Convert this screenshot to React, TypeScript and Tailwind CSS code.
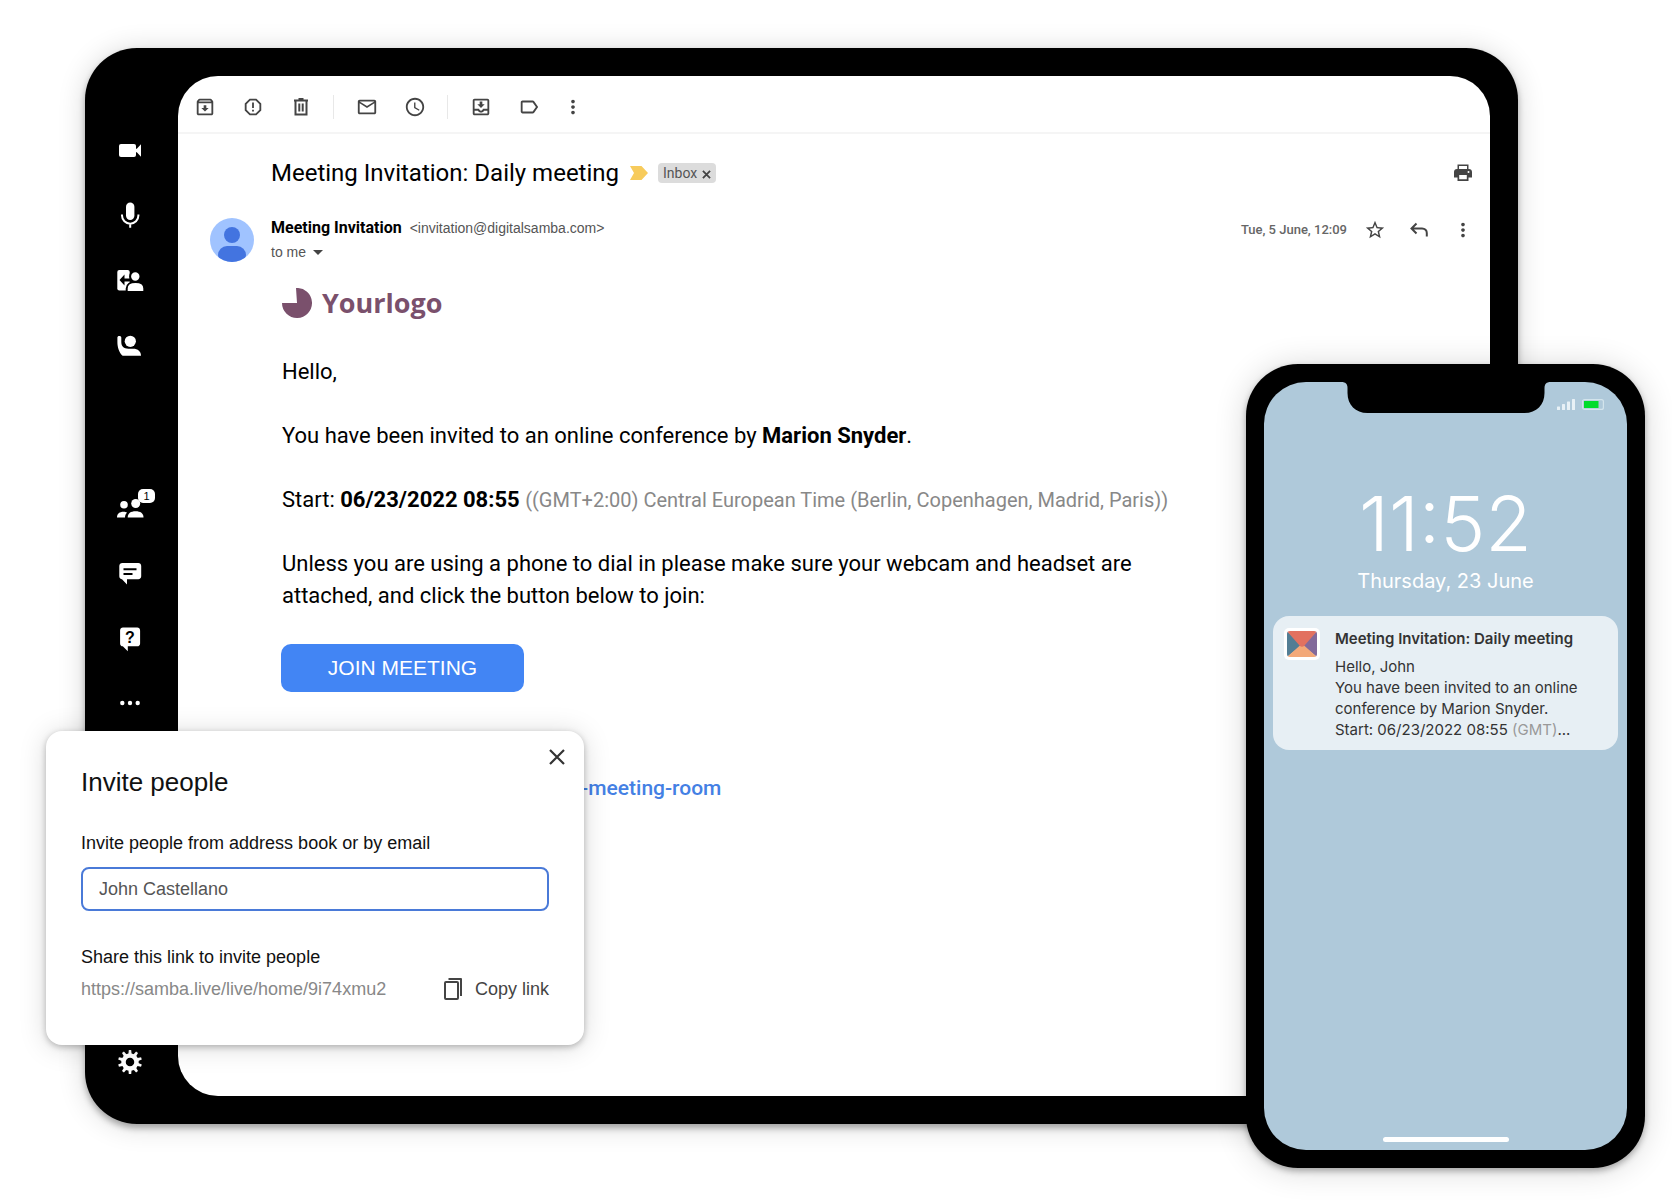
import type { ReactNode } from "react";
import {
  MdLabelOutline,
  MdMailOutline,
  MdMoreVert,
  MdOutlineArchive,
  MdOutlineMoveToInbox,
  MdReportGmailerrorred,
  MdSchedule,
  MdStarBorder,
} from "react-icons/md";

const GEAR_TEETH = [0, 36, 72, 108, 144, 180, 216, 252, 288, 324];

function SideButton({
  label,
  children,
}: {
  label: string;
  children: ReactNode;
}) {
  return (
    <button type="button" aria-label={label} className="relative size-8">
      <svg viewBox="0 0 32 32" className="size-8 fill-white">
        {children}
      </svg>
    </button>
  );
}

function Sidebar() {
  return (
    <nav className="flex w-[93px] shrink-0 flex-col items-center pt-[86px] pr-[3px] pb-10">
      <div className="flex flex-col gap-[33px]">
        <SideButton label="Camera">
          <rect x="5" y="10" width="17" height="13" rx="2" />
          <path d="M21 15.5l2-1 4-4.300v12.600l-4-4.300-2-1z" />
        </SideButton>
        <SideButton label="Microphone">
          <rect x="12" y="3.500" width="8.400" height="17.500" rx="4.200" />
          <path
            d="M8 15.500v1a8.200 8.200 0 0 0 16.400 0v-1M16.200 24.500v4.200"
            fill="none"
            stroke="white"
            strokeWidth="2"
          />
        </SideButton>
        <SideButton label="Share screen">
          <rect x="3.300" y="6" width="12.400" height="20.500" rx="2" />
          <path d="M5.500 16l5-5.500v4h6v3h-6v4z" className="fill-black" />
          <circle
            cx="21.300"
            cy="12.500"
            r="5.200"
            className="fill-white stroke-black"
            strokeWidth="2"
          />
          <path
            d="M12.700 28v-3.500c0-4 3.500-6.400 8.800-6.400s8.800 2.400 8.800 6.400V28z"
            className="fill-white stroke-black"
            strokeWidth="2"
          />
        </SideButton>
        <SideButton label="Raise hand">
          <circle cx="16.300" cy="12.300" r="5.600" />
          <path d="M3.400 8.600c0-1 .7-1.600 1.900-1.600s2 .6 2 1.600v4.400c0 4.500 2.500 6.700 7 6.700h4.700c5 0 8 2.700 8 7H8.600C5 23.700 3.400 18 3.400 13z" />
        </SideButton>
      </div>

      <div className="mt-[130px] flex flex-col gap-[33px]">
        <div className="relative size-8">
          <SideButton label="Participants">
            <circle cx="10" cy="13.700" r="3.800" />
            <circle cx="21.700" cy="12.500" r="4.500" />
            <path d="M3 26.500c0-3.700 2.500-5.800 6.500-5.800 1.500 0 2.500.2 3.500.7-1.300 1.500-2 3-2 5.100z" />
            <path d="M13.700 26.500c0-4.300 3-6.300 7.900-6.300s7.900 2 7.900 6.300z" />
          </SideButton>
          <span className="absolute -top-0.5 left-6 flex h-[14px] w-[17px] items-center justify-center rounded-[5px] bg-white font-['Liberation_Sans',sans-serif] text-[11px] leading-none text-black">
            1
          </span>
        </div>
        <SideButton label="Chat">
          <path d="M8.300 7h16c1.700 0 2.900 1.200 2.900 2.900v10.400c0 1.700-1.200 2.900-2.900 2.900H13v5.300L8 23.200c-1.600 0-2.700-1.200-2.700-2.900V9.900C5.300 8.200 6.600 7 8.300 7z" />
          <path
            d="M9.500 13.300h13M9.500 18h9"
            className="stroke-black"
            strokeWidth="2"
          />
        </SideButton>
        <SideButton label="Q&A">
          <path d="M9 6.500h14.200c1.700 0 2.900 1.200 2.900 2.900v13c0 1.700-1.200 2.900-2.900 2.900H13.800v4.900l-5-4.900c-1.600 0-2.700-1.200-2.700-2.900v-13c0-1.700 1.200-2.900 2.900-2.900z" />
          <text
            x="16"
            y="22"
            textAnchor="middle"
            className="fill-black font-['Liberation_Sans',sans-serif] text-[16px] font-bold"
          >
            ?
          </text>
        </SideButton>
        <SideButton label="More options">
          <circle cx="8.300" cy="17" r="2.200" />
          <circle cx="16" cy="17" r="2.200" />
          <circle cx="23.700" cy="17" r="2.200" />
        </SideButton>
      </div>

      <div className="mt-auto">
        <SideButton label="Settings">
          <circle
            cx="16"
            cy="16"
            r="6.500"
            fill="none"
            stroke="white"
            strokeWidth="4.500"
          />
          {GEAR_TEETH.map((angle) => (
            <path
              key={angle}
              d="M14.300 9l.5-5h2.400l.5 5z"
              transform={`rotate(${angle} 16 16)`}
            />
          ))}
        </SideButton>
      </div>
    </nav>
  );
}

function IconButton({
  label,
  children,
}: {
  label: string;
  children: ReactNode;
}) {
  return (
    <button
      type="button"
      aria-label={label}
      className="flex size-6 items-center justify-center text-[22px] text-[#444]"
    >
      {children}
    </button>
  );
}

function Toolbar() {
  return (
    <div className="flex h-[58px] items-center border-b-2 border-[#f5f5f5] pt-[6px] pl-[15px]">
      <div className="flex gap-6">
        <IconButton label="Archive">
          <MdOutlineArchive />
        </IconButton>
        <IconButton label="Report spam">
          <MdReportGmailerrorred />
        </IconButton>
        <IconButton label="Delete">
          <svg
            viewBox="0 0 24 24"
            className="size-6 fill-none stroke-current"
            strokeWidth="2"
          >
            <path d="M6.500 6v13.500h11V6M5 5.500h14M9.500 4h5M10.300 8.500v8M13.700 8.500v8" />
          </svg>
        </IconButton>
      </div>
      <div className="mr-[21px] ml-5 h-6 w-px bg-[#e8e8e8]" />
      <div className="flex gap-6">
        <IconButton label="Mark as unread">
          <MdMailOutline />
        </IconButton>
        <IconButton label="Snooze">
          <MdSchedule />
        </IconButton>
      </div>
      <div className="mr-[21px] ml-5 h-6 w-px bg-[#e8e8e8]" />
      <div className="flex gap-6">
        <IconButton label="Move to inbox">
          <MdOutlineMoveToInbox />
        </IconButton>
        <IconButton label="Label">
          <MdLabelOutline />
        </IconButton>
        <button
          type="button"
          aria-label="More"
          className="flex h-6 w-4 items-center justify-center text-[#444]"
        >
          <MdMoreVert className="size-[22px] shrink-0" />
        </button>
      </div>
    </div>
  );
}

function Mail() {
  return (
    <main className="my-7 mr-7 min-w-0 flex-1 overflow-hidden rounded-[40px] bg-white font-['Roboto',sans-serif] text-black">
      <Toolbar />

      <div className="mt-[19px] flex h-10 items-center pr-[15px] pl-[93px]">
        <h1 className="text-2xl">Meeting Invitation: Daily meeting</h1>
        <svg viewBox="0 0 18 14" className="ml-[11px] h-[14px] w-[18px]">
          <path d="M0 0h11.500L18 7l-6.500 7H0l4-7z" fill="#f7cb5c" />
        </svg>
        <span className="ml-[10px] flex h-5 items-center gap-[5px] rounded bg-[#dcdcdc] px-[5px] text-sm text-[#555]">
          Inbox
          <button type="button" aria-label="Remove label">
            <svg
              viewBox="0 0 10 10"
              className="mt-0.5 size-[9px] fill-none stroke-[#444]"
              strokeWidth="2"
            >
              <path d="M1 1l8 8M9 1l-8 8" />
            </svg>
          </button>
        </span>
        <div className="ml-auto">
          <IconButton label="Print">
            <svg viewBox="0 0 24 24" className="size-6 fill-current">
              <path d="M6.500 3.500h11V8h-11zM8 5v3h8V5z" fillRule="evenodd" />
              <path
                d="M6 8h12c1.800 0 3 1.200 3 3v5.500h-3.500V20h-11v-3.500H3V11c0-1.800 1.200-3 3-3zm2.200 6v4.300h7.600V14zM17.500 10a1 1 0 1 0 0 2 1 1 0 0 0 0-2z"
                fillRule="evenodd"
              />
            </svg>
          </IconButton>
        </div>
      </div>

      <div className="mt-[23px] flex pr-[15px] pl-8">
        <svg viewBox="0 0 44 44" className="mt-0.5 size-11 shrink-0">
          <clipPath id="avatar">
            <circle cx="22" cy="22" r="22" />
          </clipPath>
          <g clipPath="url(#avatar)">
            <rect width="44" height="44" fill="#a0c3ff" />
            <circle cx="22" cy="17" r="8" fill="#4374e0" />
            <rect x="8" y="28" width="28" height="18" rx="9" fill="#4374e0" />
          </g>
        </svg>
        <div className="ml-[17px]">
          <div className="flex h-6 items-center gap-2">
            <span className="text-base font-bold">Meeting Invitation</span>
            <span className="font-['Liberation_Sans',sans-serif] text-sm text-[#555]">
              &lt;invitation@digitalsamba.com&gt;
            </span>
          </div>
          <button
            type="button"
            className="flex h-6 items-center gap-[7px] font-['Liberation_Sans',sans-serif] text-sm text-[#555]"
          >
            to me
            <svg viewBox="0 0 10 5" className="h-[5px] w-[10px] fill-[#444]">
              <path d="M0 0h10L5 5z" />
            </svg>
          </button>
        </div>
        <div className="ml-auto flex h-7 items-center">
          <span className="mr-4 text-[13px] font-medium text-[#666]">
            Tue, 5 June, 12:09
          </span>
          <div className="flex gap-5">
            <IconButton label="Star">
              <MdStarBorder />
            </IconButton>
            <IconButton label="Reply">
              <svg
                viewBox="0 0 24 24"
                className="size-6 fill-none stroke-current"
                strokeWidth="2"
              >
                <path d="M9.500 5.500L4.500 10.500l5 5M4.500 10.500H15c3 0 4.800 2 4.800 4.500v3.500" />
              </svg>
            </IconButton>
            <IconButton label="More">
              <MdMoreVert />
            </IconButton>
          </div>
        </div>
      </div>

      <article className="pt-[23px] pr-10 pl-[104px] text-[22px] leading-8">
        <div className="flex h-8 items-center gap-[10px]">
          <svg viewBox="0 0 30 30" className="size-[30px]">
            <path d="M14 0a15 15 0 1 1-14 15h15z" fill="#7a506c" />
          </svg>
          <span className="font-['Open_Sans',sans-serif] text-[27px] font-bold text-[#7a506c]">
            Yourlogo
          </span>
        </div>
        <div className="mt-[37px] flex max-w-[900px] flex-col gap-8">
          <p>Hello,</p>
          <p>
            You have been invited to an online conference by{" "}
            <b>Marion Snyder</b>.
          </p>
          <p>
            Start: <b>06/23/2022 08:55</b>{" "}
            <span className="text-xl text-[#888]">
              ((GMT+2:00) Central European Time (Berlin, Copenhagen, Madrid,
              Paris))
            </span>
          </p>
          <p>
            Unless you are using a phone to dial in please make sure your
            webcam and headset are
            <br />
            attached, and click the button below to join:
          </p>
        </div>
        <button
          type="button"
          className="mt-8 -ml-px block h-12 w-[243px] rounded-[10px] bg-[#4285f4] font-['Liberation_Sans',sans-serif] text-[21px] text-white"
        >
          JOIN MEETING
        </button>
        <a
          href="#room"
          className="mt-20 inline-block text-[21px] font-medium text-[#4480e4]"
        >
          https://digitalsamba.com/group-meeting-room
        </a>
      </article>
    </main>
  );
}

function InviteDialog() {
  return (
    <section
      role="dialog"
      aria-labelledby="invite-title"
      className="absolute top-[731px] left-[46px] w-[538px] rounded-2xl bg-white px-[35px] pt-[31px] pb-[42px] font-['Liberation_Sans',sans-serif] text-lg text-[#111] shadow-[0_2px_6px_rgba(0,0,0,0.25),0_2px_28px_rgba(0,0,0,0.15)]"
    >
      <button
        type="button"
        aria-label="Close"
        className="absolute top-[18px] right-[19px]"
      >
        <svg
          viewBox="0 0 16 16"
          className="size-4 fill-none stroke-[#333]"
          strokeWidth="2.200"
        >
          <path d="M1 1l14 14M15 1L1 15" />
        </svg>
      </button>
      <h2 id="invite-title" className="text-[26px] leading-10">
        Invite people
      </h2>
      <label htmlFor="invitee" className="mt-[29px] block leading-6">
        Invite people from address book or by email
      </label>
      <input
        id="invitee"
        type="text"
        defaultValue="John Castellano"
        className="mt-3 block h-11 w-full rounded-lg border-2 border-[#4a7ad8] px-4 text-[#555] outline-none"
      />
      <p className="mt-[34px] leading-6">Share this link to invite people</p>
      <div className="mt-[6px] flex items-center justify-between leading-7">
        <a href="#invite" className="text-[#888]">
          https://samba.live/live/home/9i74xmu2
        </a>
        <button
          type="button"
          className="flex items-center gap-[13px] text-[#444]"
        >
          <svg
            viewBox="0 0 18 22"
            className="h-[22px] w-[18px] fill-none stroke-current"
            strokeWidth="2"
            strokeLinejoin="round"
          >
            <rect x="1" y="4" width="13" height="17" rx="1" />
            <path d="M4.500 1H17v17" />
          </svg>
          Copy link
        </button>
      </div>
    </section>
  );
}

function Phone() {
  return (
    <aside className="absolute top-[364px] right-[27px] bottom-8 flex w-[399px] rounded-[52px] bg-black p-[18px] font-['Inter',sans-serif] shadow-[0_3px_6px_rgba(0,0,0,0.3),0_2px_32px_rgba(0,0,0,0.16)]">
      <div className="relative flex flex-1 flex-col rounded-[42px] bg-[#afc9da]">
        <svg
          viewBox="0 0 209 31"
          className="absolute top-0 left-1/2 h-[31px] w-[209px] -translate-x-1/2 fill-black"
        >
          <path d="M0 0c4 0 6 2 6 6v5c0 12 8 20 20 20h157c12 0 20-8 20-20V6c0-4 2-6 6-6z" />
        </svg>
        <div className="flex h-10 items-center justify-end gap-[7px] pt-1 pr-[23px]">
          <svg viewBox="0 0 18 11" className="h-[11px] w-[18px] fill-[#e8f1f6]">
            <rect x="0" y="7.500" width="3" height="3.500" rx=".5" />
            <rect x="5" y="5" width="3" height="6" rx=".5" />
            <rect x="10" y="2.500" width="3" height="8.500" rx=".5" />
            <rect x="15" y="0" width="3" height="11" rx=".5" />
          </svg>
          <svg viewBox="0 0 22 11" className="h-[11px] w-[22px]">
            <rect
              x=".6"
              y=".6"
              width="20.800"
              height="9.800"
              rx="2"
              fill="none"
              stroke="#d3e4ec"
              strokeWidth="1.200"
            />
            <rect x="2" y="2" width="14.500" height="7" fill="#00dc2c" />
          </svg>
        </div>
        <div className="mt-[55px] text-center text-white">
          <p className="text-[76px] leading-[92px] font-light">11:52</p>
          <p className="text-xl leading-6">Thursday, 23 June</p>
        </div>
        <div className="mx-[9px] mt-[23px] flex items-start gap-[15px] rounded-2xl bg-[#e7eff4] pt-[11px] pb-[10px] pl-[11px]">
          <svg viewBox="0 0 36 32" className="mt-px h-8 w-9 shrink-0">
            <clipPath id="mail">
              <rect x="3" y="3" width="30" height="26" rx="3" />
            </clipPath>
            <rect width="36" height="32" rx="5" fill="white" />
            <g clipPath="url(#mail)">
              <path d="M3 3l15 14L3 29z" fill="#527d94" />
              <path d="M33 3L18 17l15 12z" fill="#83699a" />
              <path d="M3 29l13.500-12h3L33 29z" fill="#f3a878" />
              <path d="M2 2h32L20.500 17.500q-2.500 2.500-5 0z" fill="#e27160" />
            </g>
          </svg>
          <div className="text-[15px] leading-[21px] text-[#333]">
            <h2 className="mb-[5px] leading-6 font-semibold">
              Meeting Invitation: Daily meeting
            </h2>
            <p>
              Hello, John
              <br />
              You have been invited to an online
              <br />
              conference by Marion Snyder.
              <br />
              Start: 06/23/2022 08:55 <span className="text-[#999]">(GMT)</span>
              ...
            </p>
          </div>
        </div>
        <div className="mx-auto mt-auto mb-2 h-[5px] w-[126px] rounded-full bg-white" />
      </div>
    </aside>
  );
}

export default function App() {
  return (
    <div className="relative flex min-h-screen bg-white pt-12 pr-[154px] pb-[76px] pl-[85px]">
      <div className="flex flex-1 rounded-[52px] bg-black shadow-[0_4px_6px_rgba(0,0,0,0.3),0_2px_28px_rgba(0,0,0,0.16)]">
        <Sidebar />
        <Mail />
      </div>
      <InviteDialog />
      <Phone />
    </div>
  );
}
